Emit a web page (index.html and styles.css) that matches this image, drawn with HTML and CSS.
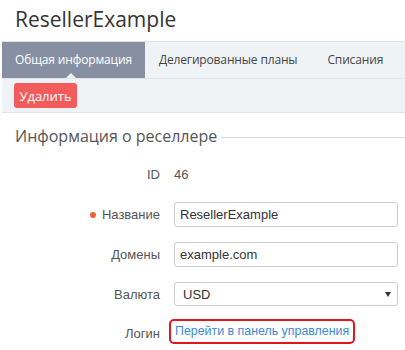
FILE: index.html
```html
<!DOCTYPE html>
<html lang="ru">
<head>
    <meta charset="UTF-8">
    <title>ResellerExample</title>
    <link rel="stylesheet" href="styles.css">
</head>
<body>

<h1 class="page-title">ResellerExample</h1>

<div class="tabs">
    <a class="tab active" href="#">Общая информация</a>
    <a class="tab" href="#">Делегированные планы</a>
    <a class="tab" href="#">Списания</a>
</div>

<div class="actions">
    <button class="btn-danger">Удалить</button>
</div>

<div class="section">
    <h2 class="section-title"><span>Информация о реселлере</span></h2>

    <div class="form">
        <div class="label">ID</div>
        <div class="value">46</div>

        <div class="label required">Название</div>
        <div class="field"><input type="text" value="ResellerExample"></div>

        <div class="label">Домены</div>
        <div class="field"><input type="text" value="example.com"></div>

        <div class="label">Валюта</div>
        <div class="field select-wrap">
            <select>
                <option>USD</option>
            </select>
        </div>

        <div class="label login">Логин</div>
        <div class="field login">
            <a class="panel-link" href="#">Перейти в панель управления</a>
        </div>
    </div>
</div>

</body>
</html>
```

FILE: styles.css
```css
body {
    margin: 0;
    font-family: "Liberation Sans", Arial, sans-serif;
    font-size: 13px;
    color: #555;
    background: #fff;
}
.page-title {
    margin: 0;
    height: 41px;
    padding-left: 15px;
    font-family: "Open Sans", sans-serif;
    font-size: 21px;
    font-weight: normal;
    line-height: 39px;
    color: #333;
}
.tabs {
    display: flex;
    margin-left: 2px;
    height: 36px;
    background: #f0f3f6;
    border-top: 1px solid #dfe3e8;
    border-bottom: 1px solid #dfe3e8;
}
.tab {
    position: relative;
    padding: 0 13px;
    font-family: "Open Sans", sans-serif;
    font-size: 12px;
    letter-spacing: -0.15px;
    line-height: 36px;
    white-space: nowrap;
    color: #444;
    text-decoration: none;
}
.tab + .tab {
    padding-left: 14px;
    padding-right: 16px;
}
.tab.active {
    background: #8790a3;
    color: #fff;
}
.tab.active::after {
    content: "";
    position: absolute;
    left: 64px;
    bottom: 0;
    border-left: 5px solid transparent;
    border-right: 5px solid transparent;
    border-bottom: 5px solid #f0f3f6;
}
.actions {
    margin-left: 2px;
    height: 34px;
    padding: 4px 12px 0;
    box-sizing: border-box;
    background: #f0f3f6;
    border-bottom: 1px solid #dfe3e8;
}
.btn-danger {
    height: 25px;
    width: 63px;
    padding: 0;
    border: none;
    border-radius: 3px;
    background: #f25c5c;
    color: #fff;
    font-family: "Open Sans", sans-serif;
    font-size: 13px;
    cursor: pointer;
}
.section {
    padding-top: 11px;
}
.section-title {
    display: flex;
    align-items: center;
    margin: 0 0 14px 15px;
    font-family: "Open Sans", sans-serif;
    font-size: 16px;
    font-weight: normal;
    color: #555;
    line-height: 24px;
}
.section-title::after {
    content: "";
    flex: 1;
    height: 1px;
    margin-left: 4px;
    margin-top: 3px;
    background: #d5dae1;
}
.form {
    display: grid;
    grid-template-columns: 160px 1fr;
    column-gap: 14px;
    row-gap: 15px;
    padding-right: 7px;
    grid-auto-rows: 25px;
}
.label {
    display: flex;
    align-items: center;
    justify-content: flex-end;
    color: #555;
}
.required::before {
    content: "";
    width: 6px;
    height: 6px;
    margin-right: 6px;
    border-radius: 50%;
    background: #f0603c;
}
.value {
    display: flex;
    align-items: center;
    color: #555;
}
.field input,
.field select {
    width: 100%;
    height: 25px;
    box-sizing: border-box;
    border: 1px solid #ccc;
    border-radius: 3px;
    padding: 0 5px;
    font-family: "Liberation Sans", Arial, sans-serif;
    font-size: 13px;
    color: #333;
    background: #fff;
}
.select-wrap {
    position: relative;
}
.field select {
    height: 24px;
    padding-left: 8px;
    appearance: none;
    -webkit-appearance: none;
}
.select-wrap::after {
    content: "";
    position: absolute;
    right: 7px;
    top: 10px;
    border-left: 3px solid transparent;
    border-right: 3px solid transparent;
    border-top: 5px solid #333;
}
.label.login {
    margin-top: -3px;
}
.field.login {
    margin-top: -3px;
}
.panel-link {
    display: inline-block;
    height: 25px;
    box-sizing: border-box;
    padding: 0 4px;
    border: 2px solid #e4141c;
    border-radius: 5px;
    font-size: 12.4px;
    line-height: 21px;
    color: #3d8ad6;
    text-decoration: none;
    margin-left: -5px;
}
```
